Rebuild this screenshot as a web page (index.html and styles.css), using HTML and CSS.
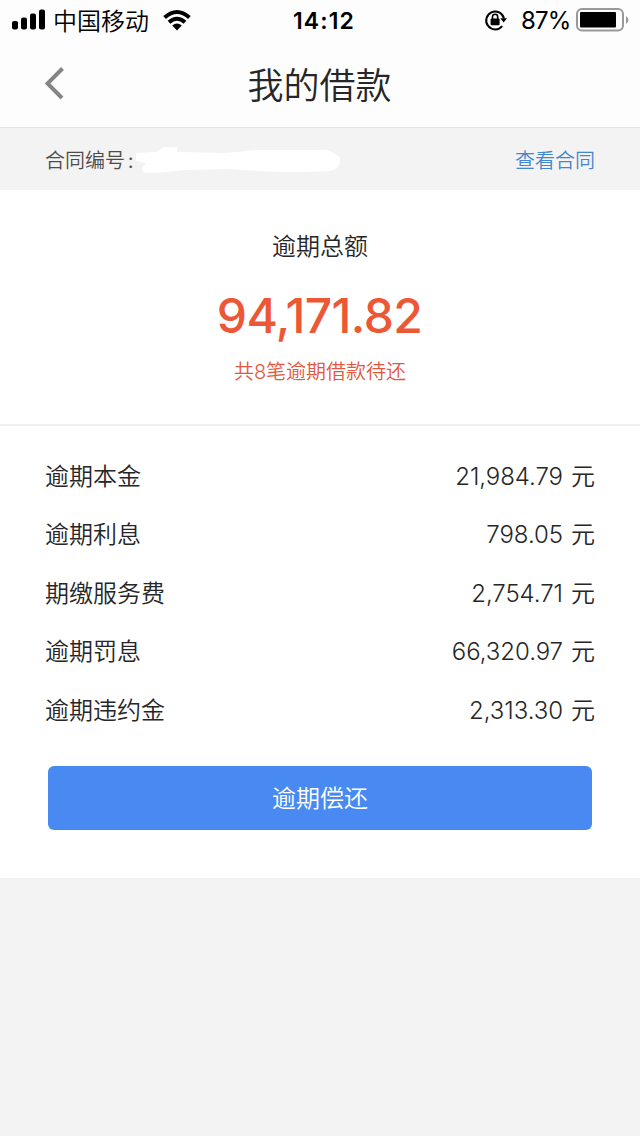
FILE: index.html
```html
<!DOCTYPE html>
<html lang="zh-CN">
<head>
<meta charset="utf-8">
<title>我的借款</title>
<link rel="stylesheet" href="styles.css">
</head>
<body>
<div class="status">
  <svg class="signal" width="34" height="22" viewBox="0 0 34 22"><rect x="0" y="12" width="6" height="8.500" rx="2"/><rect x="9" y="8.500" width="6" height="12" rx="2"/><rect x="18" y="4.500" width="6" height="16" rx="2"/><rect x="27" y="0.500" width="6" height="20" rx="2"/></svg>
  <span class="carrier">中国移动</span>
  <svg class="wifi" width="28" height="22" viewBox="0 0 28 22"><g fill="none" stroke="#000" stroke-width="4"><path d="M1.600 8.600Q14-2.600 26.400 8.600"/><path d="M6 13.300Q14 6.200 22 13.300"/></g><path d="M9.200 16.600Q14 12.600 18.800 16.600L14 21.500Z"/></svg>
  <span class="time">14:12</span>
  <svg class="lock" width="24" height="24" viewBox="0 0 24 24"><path d="M18.200 18.100A9 9 0 1 1 20 10.500" fill="none" stroke="#000" stroke-width="2"/><path d="M16.300 10.300H23L19.600 14.600Z"/><rect x="6.600" y="10.500" width="9" height="6.800" rx="1"/><path d="M8.500 11V8.800a2.600 2.600 0 0 1 5.200 0V11" fill="none" stroke="#000" stroke-width="1.600"/></svg>
  <span class="percent">87%</span>
  <svg class="battery" width="53" height="24" viewBox="0 0 53 24"><rect x="1" y="1" width="46" height="21.500" rx="5" fill="none" stroke="#999" stroke-width="2"/><rect x="4" y="4" width="36" height="15.500" rx="1"/><path d="M50 8q5 4 0 8Z" fill="#999"/></svg>
</div>
<header class="nav">
  <svg class="back" width="20" height="34" viewBox="0 0 20 34"><path d="M17.500 1.500L2.500 16.500L17 31" fill="none" stroke="#858585" stroke-width="4"/></svg>
  <h1 class="title">我的借款</h1>
</header>
<div class="contract">
  <span class="contract-label">合同编号<span class="colon">:</span></span>
  <svg class="redaction" width="207" height="30" viewBox="0 0 207 30"><path d="M0 6L20 5L28 0L41 -1V5L90 6L120 3L190 3Q203 7 204 12Q204 22 194 24Q150 27 94 22L50 23L20 26H8L6 21L10 16L0 14Z" fill="#fff"/></svg>
  <a class="contract-link">查看合同</a>
</div>
<main class="card">
  <section class="summary">
    <div class="label">逾期总额</div>
    <div class="total">94,171.82</div>
    <div class="note">共<span class="count">8</span>笔逾期借款待还</div>
  </section>
  <div class="rows">
    <div class="row"><span>逾期本金</span><span class="amount"><span class="number">21,984.79</span><span>元</span></span></div>
    <div class="row"><span>逾期利息</span><span class="amount"><span class="number">798.05</span><span>元</span></span></div>
    <div class="row"><span>期缴服务费</span><span class="amount"><span class="number">2,754.71</span><span>元</span></span></div>
    <div class="row"><span>逾期罚息</span><span class="amount"><span class="number">66,320.97</span><span>元</span></span></div>
    <div class="row"><span>逾期违约金</span><span class="amount"><span class="number">2,313.30</span><span>元</span></span></div>
  </div>
  <button class="repay">逾期偿还</button>
</main>
</body>
</html>
```
FILE: styles.css
```css
* { box-sizing: border-box; }
body {
  margin: 0;
  height: 1136px;
  background: #f3f3f3;
  color: #262626;
  font-family: "Noto Sans CJK SC", sans-serif;
  font-weight: 350;
}
svg { display: block; flex: none; }
.status {
  display: flex;
  align-items: center;
  height: 40px;
  padding-left: 12px;
  background: #fdfdfd;
  color: #000;
  font-size: 24px;
  line-height: 40px;
}
.carrier { width: 96px; margin-left: 7px; font-weight: 350; }
.wifi { margin-left: 14px; }
.time { width: 64px; margin-left: 101px; padding-top: 2px; font-family: Inter, sans-serif; font-weight: 600; font-size: 23px; letter-spacing: 1.1px; text-align: center; white-space: nowrap; }
.lock { margin-left: 128px; }
.percent { width: 50px; margin-left: 13px; padding-top: 2px; font-family: Inter, sans-serif; font-weight: 400; font-size: 24px; letter-spacing: -0.9px; white-space: nowrap; }
.battery { margin-left: 5px; }
.nav {
  display: grid;
  grid-template-columns: 100px 1fr 100px;
  height: 88px;
  background: #fdfdfd;
  border-bottom: 1px solid #e2e2e2;
}
.back { margin: 27px 0 0 45px; }
.title { margin: 0 1px 0 0; text-align: center; font-size: 36px; font-weight: 350; line-height: 87px; }
.contract {
  display: flex;
  align-items: flex-start;
  height: 62px;
  padding: 0 45px;
  font-size: 20px;
  line-height: 64px;
}
.contract-label { width: 91px; color: #4c4c4c; white-space: nowrap; }
.colon { margin-left: 3px; }
.redaction { margin-top: 19px; }
.contract-link { margin-left: auto; color: #4486cf; }
.card { height: 688px; background: #fff; }
.summary { height: 236px; padding-top: 35px; border-bottom: 2px solid #f0f0f0; text-align: center; }
.label { font-size: 24px; line-height: 40px; }
.total { margin-top: 19px; margin-right: 1px; color: #ec5735; font-family: Inter, sans-serif; font-size: 48px; font-weight: 550; letter-spacing: -0.6px; line-height: 64px; }
.note { margin-top: 8px; color: #e2583e; font-size: 20px; line-height: 30px; }
.count { font-family: Inter, sans-serif; }
.rows { padding: 20px 45px 0; }
.row { display: flex; justify-content: space-between; height: 58.400px; font-size: 24px; line-height: 58px; }
.amount { display: flex; }
.number { margin-right: 8px; padding-top: 2px; font-family: Inter, sans-serif; font-weight: 350; letter-spacing: -0.05px; }
.repay {
  display: block;
  width: 544px;
  height: 64px;
  margin: 28px auto 0;
  padding: 0 0 2px;
  border: 0;
  border-radius: 6px;
  background: #488af1;
  color: #fff;
  font: 350 24px/62px "Noto Sans CJK SC", sans-serif;
}
```
